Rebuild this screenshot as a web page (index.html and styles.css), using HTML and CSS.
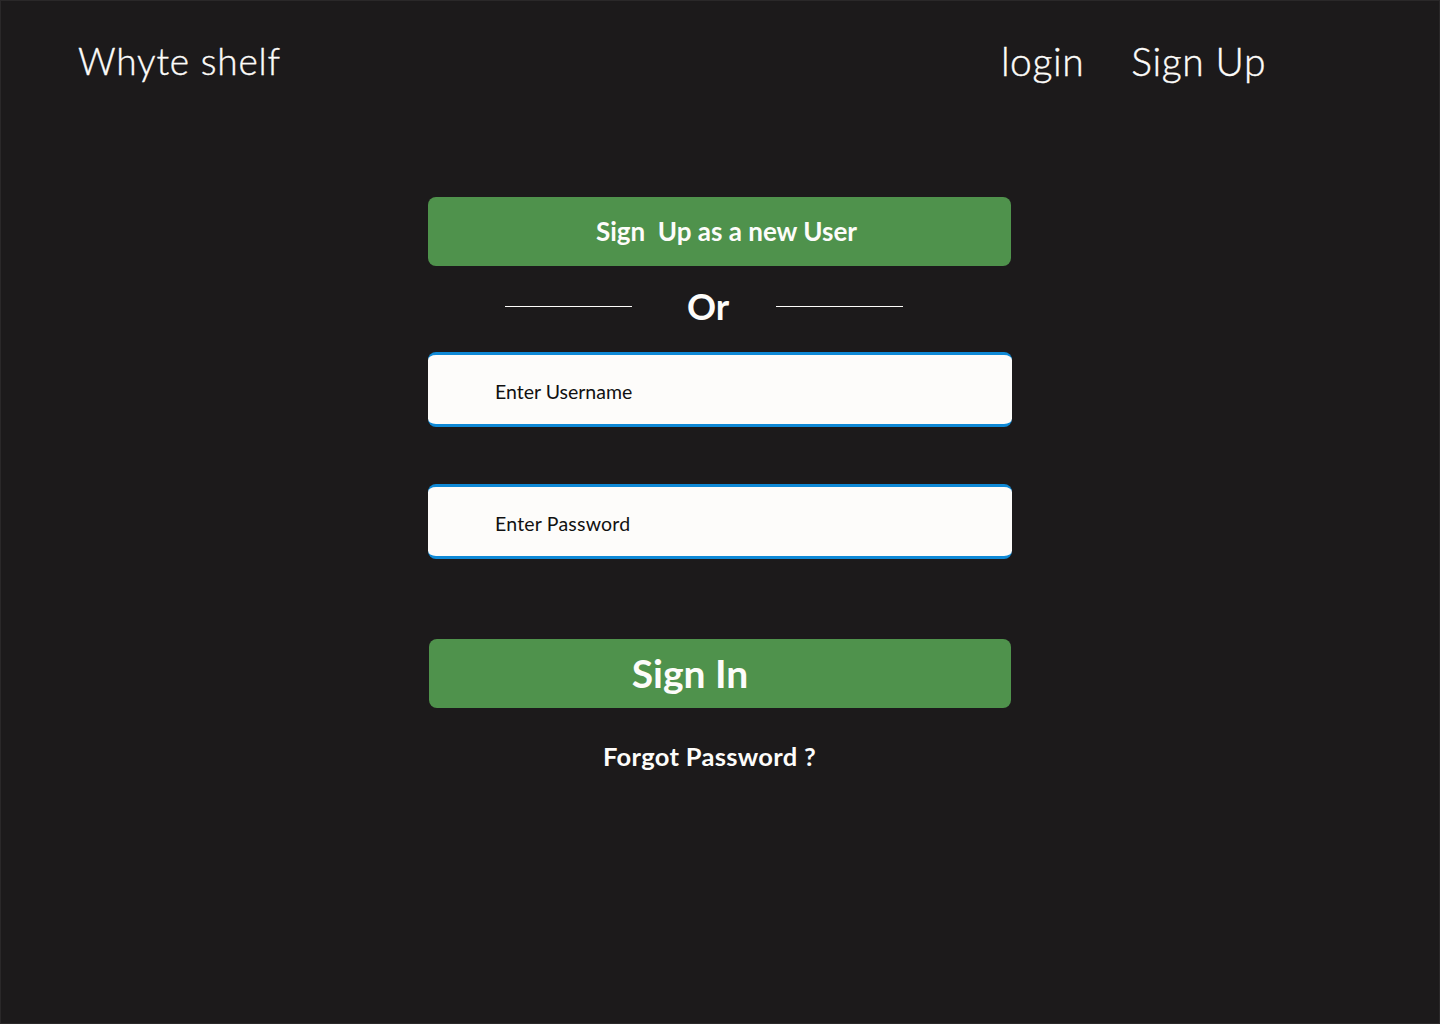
FILE: index.html
```html
<!DOCTYPE html>
<html lang="en">
<head>
<meta charset="utf-8">
<title>Whyte shelf</title>
<link rel="stylesheet" href="styles.css">
</head>
<body>
<div class="page">
  <header class="topbar">
    <div class="brand">Whyte shelf</div>
    <nav class="nav">
      <a class="nav-link" href="#">login</a>
      <a class="nav-link" href="#">Sign Up</a>
    </nav>
  </header>
  <main class="form">
    <button class="btn btn-signup">Sign&nbsp; Up as a new User</button>
    <div class="divider">
      <span class="rule"></span>
      <span class="or">Or</span>
      <span class="rule"></span>
    </div>
    <div class="field"><span class="placeholder">Enter Username</span></div>
    <div class="field field-pass"><span class="placeholder">Enter Password</span></div>
    <button class="btn btn-signin">Sign In</button>
    <a class="forgot" href="#">Forgot Password ?</a>
  </main>
</div>
</body>
</html>
```
FILE: styles.css
```css
* { box-sizing: border-box; }
html, body { margin: 0; padding: 0; }
body {
  width: 1440px;
  height: 1024px;
  background: #1c1a1b;
  font-family: "Lato", "Open Sans", sans-serif;
  color: #fdfcfa;
  overflow: hidden;
}
.page {
  width: 1440px;
  height: 1024px;
  border: 1px solid #2a2829;
  background: #1c1a1b;
}
.topbar {
  display: flex;
  justify-content: space-between;
  align-items: center;
  padding: 35px 173px 0 77px;
  height: 84px;
}
.brand {
  font-size: 37px;
  font-weight: 300;
  letter-spacing: 0.8px;
  -webkit-text-stroke: 0.4px #fdfcfa;
}
.nav {
  display: flex;
  gap: 47px;
}
.nav-link {
  color: #fdfcfa;
  text-decoration: none;
  font-size: 39px;
  font-weight: 300;
  letter-spacing: 0.6px;
  -webkit-text-stroke: 0.4px #fdfcfa;
}
.form {
  width: 583px;
  margin: 112px 0 0 427px;
  display: flex;
  flex-direction: column;
}
.btn {
  border: none;
  background: #4f924c;
  color: #fdfcfa;
  font-family: inherit;
  border-radius: 8px;
  height: 69px;
  width: 100%;
  cursor: pointer;
}
.btn-signup {
  font-size: 26px;
  font-weight: 700;
  padding-left: 20px;
  padding-bottom: 2px;
}
.divider {
  display: flex;
  align-items: center;
  height: 86px;
  padding-left: 77px;
  padding-bottom: 6px;
}
.rule {
  width: 127px;
  height: 1px;
  background: #fdfcfa;
  margin-top: 1px;
}
.or {
  font-size: 36px;
  font-weight: 700;
  margin: 0 47px 0 55px;
}
.field {
  height: 75px;
  background: #fdfcfa;
  border-top: 3px solid #0e89d6;
  border-bottom: 3px solid #0e89d6;
  border-radius: 8px;
  display: flex;
  align-items: center;
  padding: 4px 0 0 67px;
  width: 584px;
}
.placeholder {
  color: #111;
  font-size: 19.5px;
  font-weight: 400;
}
.field-pass {
  margin-top: 57px;
}
.field-pass .placeholder {
  letter-spacing: 0.2px;
}
.btn-signin {
  margin-top: 80px;
  margin-left: 1px;
  width: 582px;
  font-size: 39px;
  font-weight: 700;
  padding-right: 66px;
  padding-bottom: 2px;
}
.forgot {
  margin-top: 33px;
  align-self: center;
  margin-left: -20px;
  color: #fdfcfa;
  text-decoration: none;
  font-size: 25.5px;
  font-weight: 700;
  letter-spacing: 0.3px;
}
```
